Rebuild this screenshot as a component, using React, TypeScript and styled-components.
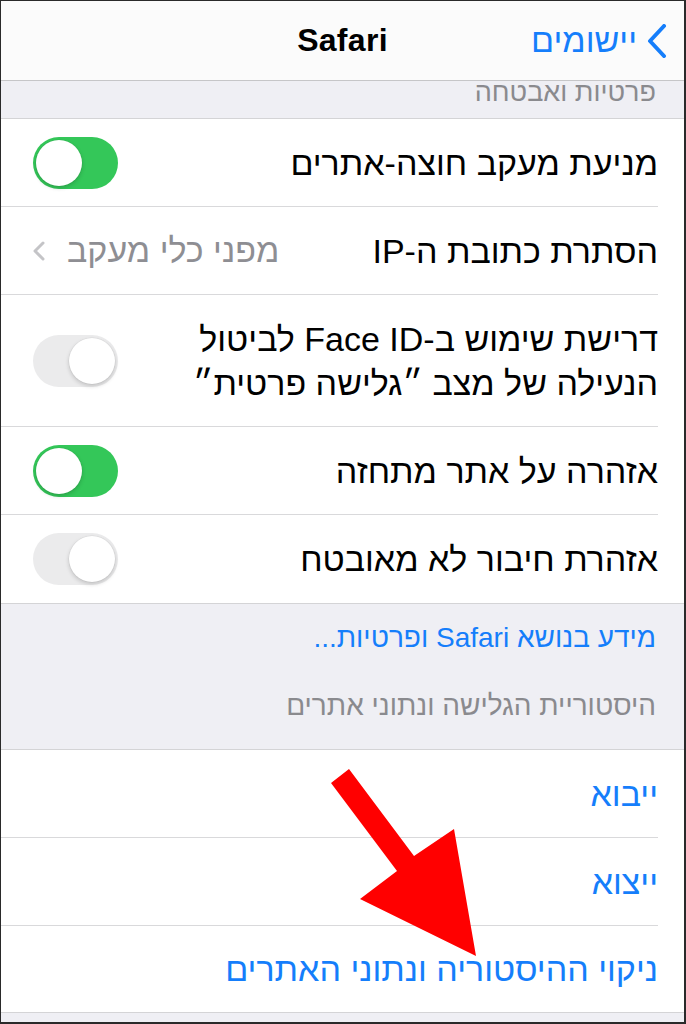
import React from "react";
import styled, { createGlobalStyle } from "styled-components";

const Global = createGlobalStyle`
  html, body { margin: 0; padding: 0; background: #fff; }
  * { box-sizing: border-box; }
`;

const Frame = styled.div`
  position: relative;
  width: 686px;
  height: 1024px;
  overflow: hidden;
  direction: rtl;
  background: #efeff4;
  border-style: solid;
  border-color: #2a2a2a;
  border-width: 1px 2px 2px 1px;
  font-family: "Liberation Sans", "DejaVu Sans", Arial, sans-serif;
`;

const NavBar = styled.div`
  position: relative;
  z-index: 2;
  height: 80px;
  display: grid;
  grid-template-columns: 1fr auto 1fr;
  align-items: center;
  background: #fbfbfb;
  border-bottom: 1px solid #c6c6c8;
`;

const Back = styled.div`
  display: flex;
  align-items: center;
  gap: 10px;
  padding-right: 17px;
  color: #157efb;
  font-size: 34px;
  justify-self: start;
`;

const Title = styled.div`
  font-size: 32px;
  font-weight: 700;
  color: #000;
  letter-spacing: 0.3px;
`;

const SectionHeader = styled.div<{ $h: number; $pt: number }>`
  height: ${(p) => p.$h}px;
  padding: ${(p) => p.$pt}px 28px 0 0;
  color: #8a8a8e;
  font-size: 28px;
  line-height: 32px;
  overflow: hidden;
`;

const ClippedText = styled.div`
  margin-top: -5px;
  font-size: 27px;
`;

const Group = styled.div`
  background: #fff;
  border-top: 1px solid #d4d4d6;
  border-bottom: 1px solid #d4d4d6;
  padding-right: 26px;
`;

const Row = styled.div<{ $h?: number }>`
  height: ${(p) => p.$h ?? 88}px;
  display: flex;
  align-items: center;
  justify-content: space-between;
  padding-left: 32px;
  border-bottom: 1px solid #d9d9db;
  &:last-child { border-bottom: none; }
`;

const Label = styled.div<{ $blue?: boolean }>`
  color: ${(p) => (p.$blue ? "#157efb" : "#000")};
  font-size: 34px;
  line-height: 44px;
`;

const Detail = styled.div`
  display: flex;
  align-items: center;
  gap: 22px;
  color: #8e8e93;
  font-size: 34px;
`;

const Track = styled.div<{ $on: boolean }>`
  position: relative;
  width: 85px;
  height: 52px;
  border-radius: 26px;
  background: ${(p) => (p.$on ? "#34c759" : "#ebebec")};
  flex-shrink: 0;
`;

const Knob = styled.div<{ $on: boolean }>`
  position: absolute;
  top: 3px;
  ${(p) => (p.$on ? "left: 3px;" : "right: 3px;")}
  width: 46px;
  height: 46px;
  border-radius: 50%;
  background: #fff;
  box-shadow: 0 2px 4px rgba(0, 0, 0, 0.18), 0 0 0 0.5px rgba(0, 0, 0, 0.06);
`;

const FooterLink = styled.div`
  color: #157efb;
  font-size: 28px;
  padding: 18px 28px 0 0;
  height: 86px;
`;

const Arrow = styled.svg`
  position: absolute;
  left: 0;
  top: 0;
  pointer-events: none;
  z-index: 3;
`;

const Toggle = ({ on }: { on: boolean }) => (
  <Track $on={on}>
    <Knob $on={on} />
  </Track>
);

export default function App() {
  return (
    <>
      <Global />
      <Frame>
        <NavBar>
          <Back>
            <svg width="20" height="34" viewBox="0 0 20 34">
              <path d="M17 2 L3 17 L17 32" fill="none" stroke="#157efb" strokeWidth="4" strokeLinecap="round" strokeLinejoin="round" />
            </svg>
            <span>יישומים</span>
          </Back>
          <Title>Safari</Title>
          <div />
        </NavBar>
        <SectionHeader $h={37} $pt={0}>
          <ClippedText>פרטיות ואבטחה</ClippedText>
        </SectionHeader>
        <Group>
          <Row>
            <Label>מניעת מעקב חוצה-אתרים</Label>
            <Toggle on />
          </Row>
          <Row>
            <Label>הסתרת כתובת ה-IP</Label>
            <Detail>
              <span>מפני כלי מעקב</span>
              <svg width="12" height="20" viewBox="0 0 12 20">
                <path d="M10 2 L2 10 L10 18" fill="none" stroke="#c4c4c7" strokeWidth="3" strokeLinecap="round" strokeLinejoin="round" />
              </svg>
            </Detail>
          </Row>
          <Row $h={132}>
            <Label>
              דרישת שימוש ב-Face ID לביטול
              <br />
              הנעילה של מצב ״גלישה פרטית״
            </Label>
            <Toggle on={false} />
          </Row>
          <Row>
            <Label>אזהרה על אתר מתחזה</Label>
            <Toggle on />
          </Row>
          <Row>
            <Label>אזהרת חיבור לא מאובטח</Label>
            <Toggle on={false} />
          </Row>
        </Group>
        <FooterLink>מידע בנושא Safari ופרטיות...</FooterLink>
        <SectionHeader $h={59} $pt={0}>היסטוריית הגלישה ונתוני אתרים</SectionHeader>
        <Group>
          <Row>
            <Label $blue>ייבוא</Label>
          </Row>
          <Row>
            <Label $blue>ייצוא</Label>
          </Row>
          <Row $h={86}>
            <Label $blue>ניקוי ההיסטוריה ונתוני האתרים</Label>
          </Row>
        </Group>
        <Arrow width="686" height="1024" viewBox="0 0 686 1024">
          <polygon
            points="330,782 348,768 413,855 453,828 475,955 359,898 396,870"
            fill="#ff0000"
          />
        </Arrow>
      </Frame>
    </>
  );
}
